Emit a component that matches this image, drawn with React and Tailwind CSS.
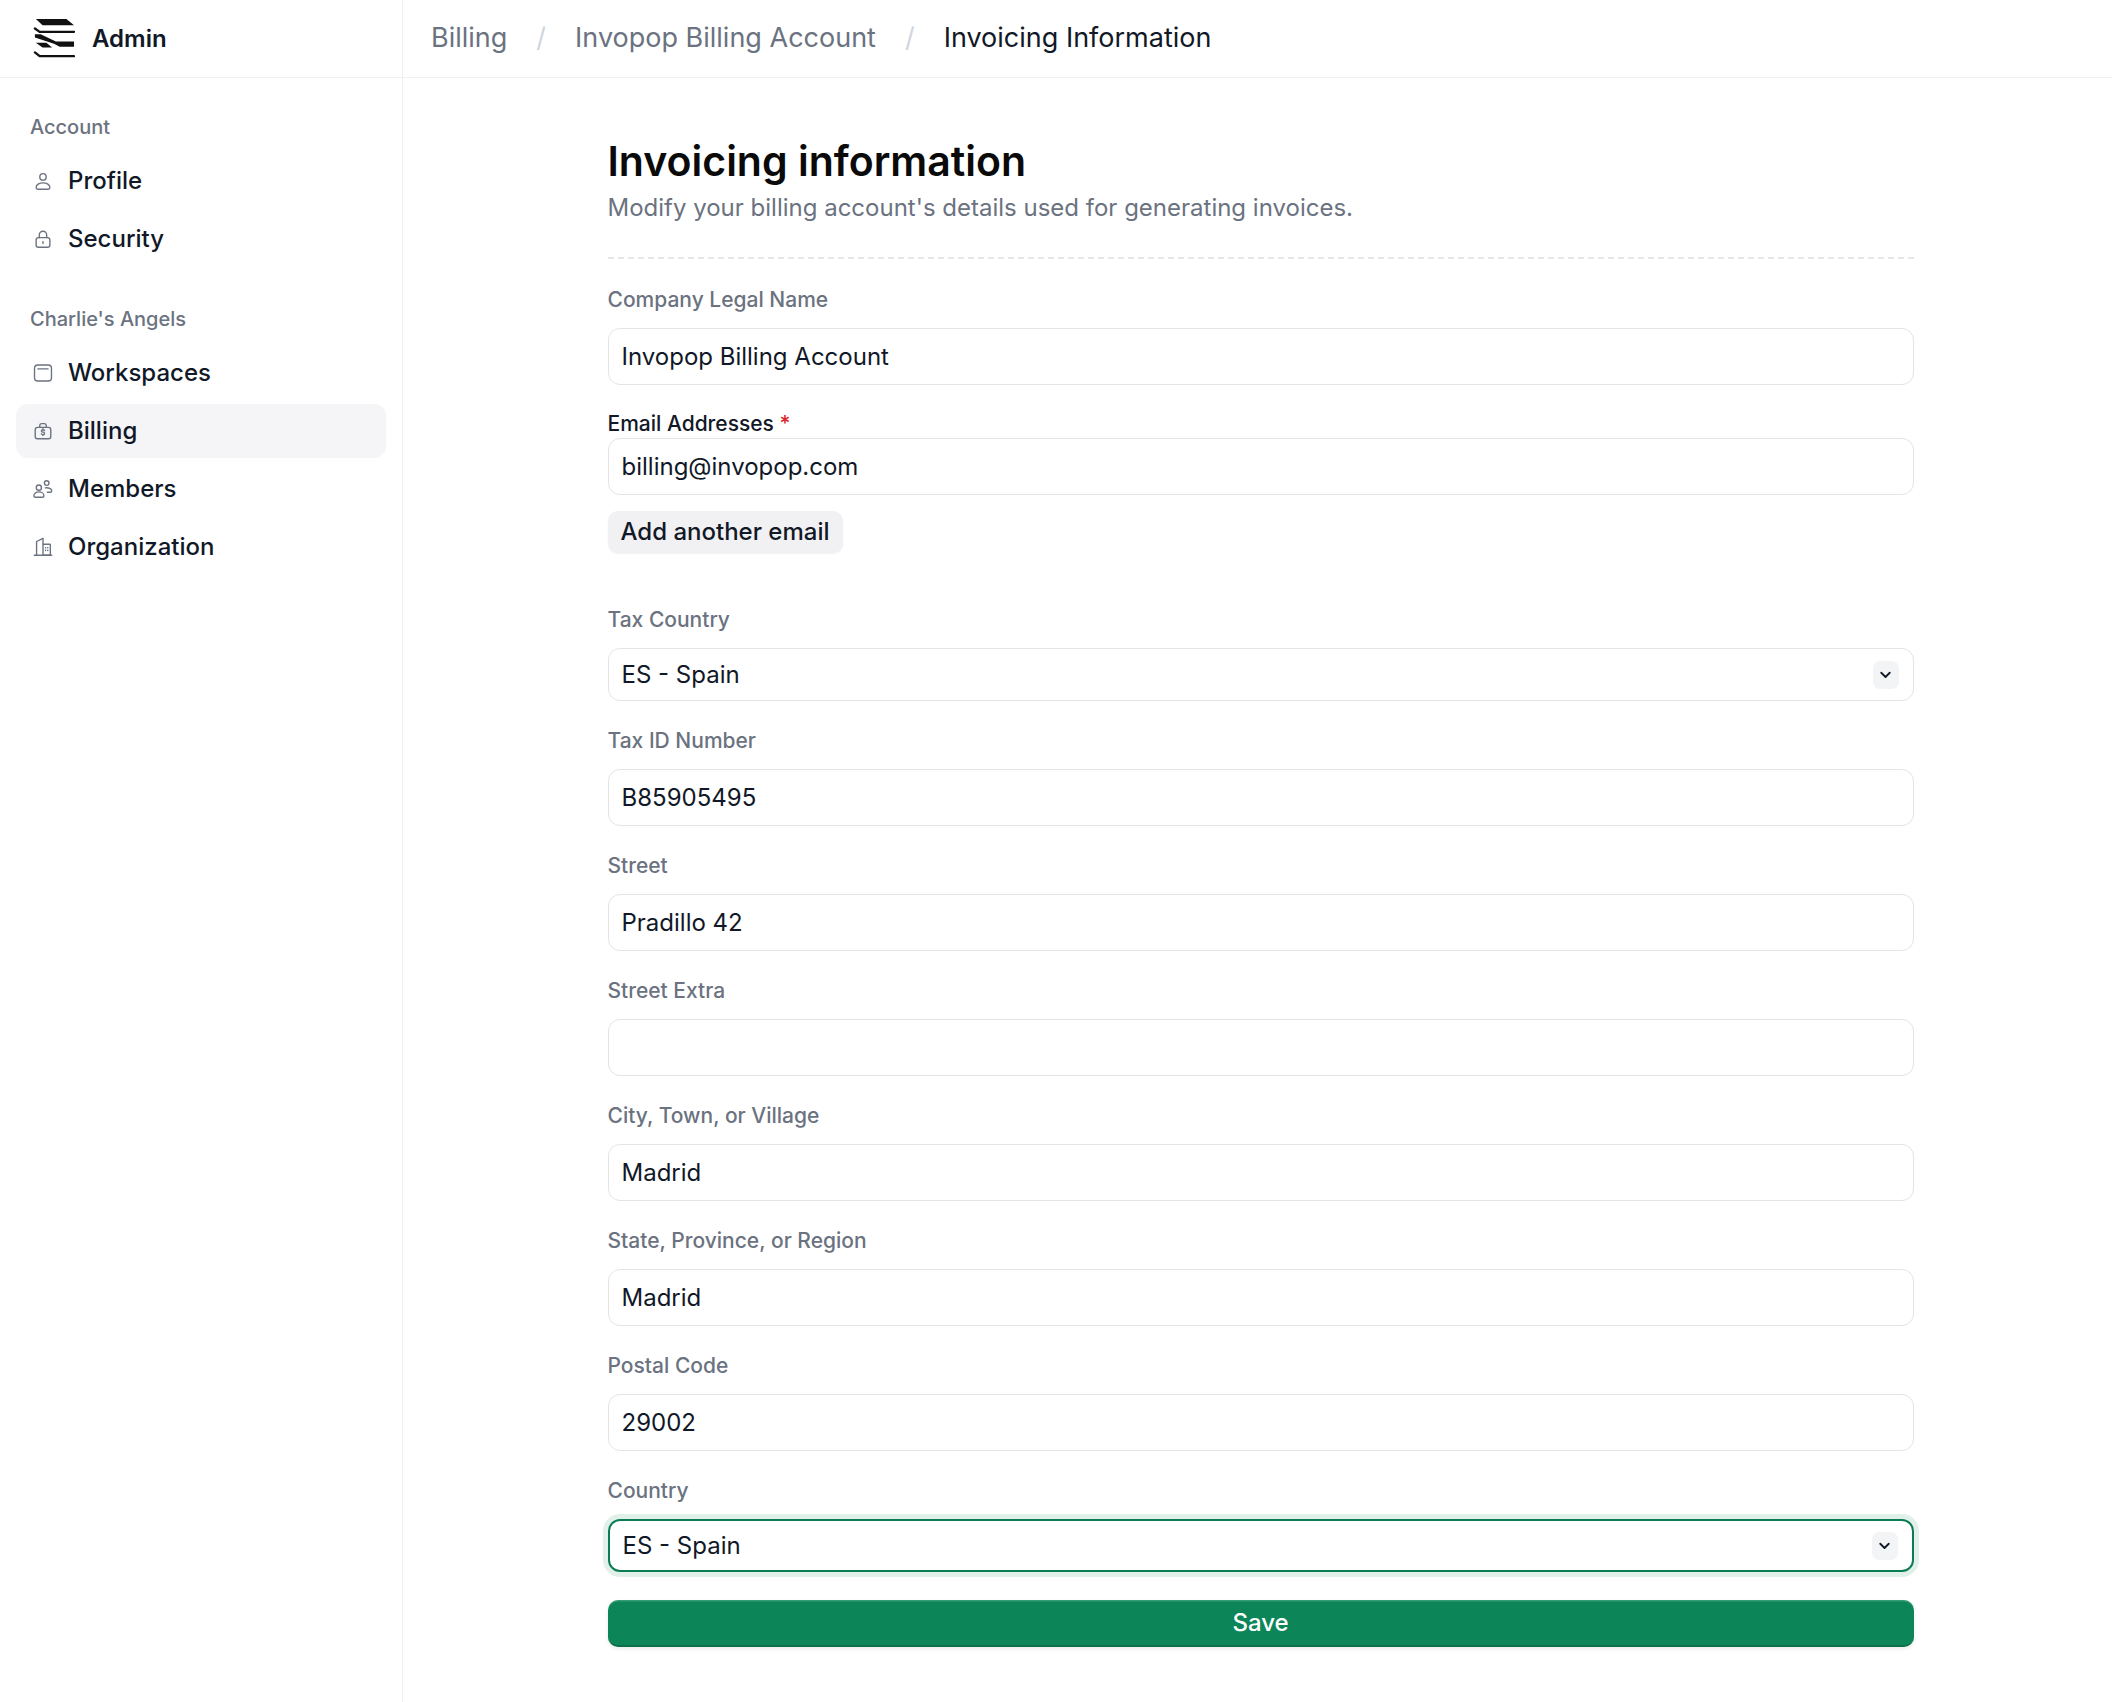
import React from "react";

const ic = "w-[22px] h-[22px] shrink-0 text-[#6b7280]";

function Logo() {
  return (
    <svg viewBox="0 0 44 46" width="42" height="44" className="shrink-0">
      <polygon points="3,2 35,2 43,8.5 10,8.5" fill="#111" />
      <path d="M2 12 L7 15.5 H43" stroke="#111" strokeWidth="2.4" fill="none" strokeLinecap="round" />
      <polygon points="2,18 8,18 24,25.5 43,25.5 43,31 28,31 22,28 2,21.5" fill="#111" />
      <polygon points="3,27 14,27 20,32 10,32" fill="#111" />
      <path d="M2 37 L7 41 H43" stroke="#111" strokeWidth="2.4" fill="none" strokeLinecap="round" />
    </svg>
  );
}

const IconProfile = () => (
  <svg viewBox="0 0 24 24" className={ic} fill="none" stroke="currentColor" strokeWidth="1.5" strokeLinecap="round" strokeLinejoin="round">
    <circle cx="12" cy="7.5" r="3.5" />
    <path d="M4.5 19.2c0-3 3.4-5.2 7.5-5.2s7.5 2.2 7.5 5.2c0 1-.8 1.8-1.8 1.8H6.3c-1 0-1.8-.8-1.8-1.8z" />
  </svg>
);
const IconLock = () => (
  <svg viewBox="0 0 24 24" className={ic} fill="none" stroke="currentColor" strokeWidth="1.5" strokeLinecap="round" strokeLinejoin="round">
    <path d="M8 10.5V7.5a4 4 0 0 1 8 0v3" />
    <rect x="4.5" y="10.5" width="15" height="10.5" rx="2.5" />
    <path d="M12 14.8v2.2" />
  </svg>
);
const IconWindow = () => (
  <svg viewBox="0 0 24 24" className={ic} fill="none" stroke="currentColor" strokeWidth="1.5" strokeLinecap="round" strokeLinejoin="round">
    <rect x="2.75" y="3.25" width="18.5" height="17.5" rx="3.5" />
    <path d="M6.5 7.5h11" />
  </svg>
);
const IconBilling = () => (
  <svg viewBox="0 0 24 24" className={ic} fill="none" stroke="currentColor" strokeWidth="1.5" strokeLinecap="round" strokeLinejoin="round">
    <path d="M8.5 8V6a2 2 0 0 1 2-2h3a2 2 0 0 1 2 2v2" />
    <rect x="3.5" y="8" width="17" height="12.5" rx="2.5" />
    <path d="M13.7 11.6c-.3-.6-1-1-1.7-1-1 0-1.7.6-1.7 1.3 0 1.8 3.4 1 3.4 2.8 0 .8-.8 1.3-1.7 1.3-.8 0-1.5-.4-1.8-1M12 9.6v1M12 15.9v1" />
  </svg>
);
const IconMembers = () => (
  <svg viewBox="0 0 24 24" className={ic} fill="none" stroke="currentColor" strokeWidth="1.5" strokeLinecap="round" strokeLinejoin="round">
    <circle cx="7.5" cy="10.5" r="2.8" />
    <circle cx="16" cy="5.5" r="2.5" />
    <path d="M2 19.5c0-2.6 2.5-4.3 5.5-4.3s5.5 1.7 5.5 4.3c0 .8-.7 1.5-1.5 1.5h-8C2.7 21 2 20.3 2 19.5z" />
    <path d="M14.5 10.8c3.6-.5 7 .9 7 3.4 0 .8-.6 1.4-1.4 1.4h-3.3" />
  </svg>
);
const IconBuilding = () => (
  <svg viewBox="0 0 24 24" className={ic} fill="none" stroke="currentColor" strokeWidth="1.5" strokeLinecap="round" strokeLinejoin="round">
    <path d="M2.5 21h19" />
    <path d="M5 21V6l7-3.5V9" />
    <rect x="12" y="9" width="8" height="12" rx="0.8" />
    <path d="M14.8 12.8h.01M17.2 12.8h.01M14.8 15.6h.01M17.2 15.6h.01" strokeWidth="1.8" />
  </svg>
);

function Chevron() {
  return (
    <div className="w-[26px] h-[28px] rounded-[7px] bg-[#f3f4f6] flex items-center justify-center">
      <svg viewBox="0 0 24 24" className="w-[17px] h-[17px] text-[#111827]" fill="none" stroke="currentColor" strokeWidth="2.6" strokeLinecap="round" strokeLinejoin="round">
        <path d="M6 9.5l6 6 6-6" />
      </svg>
    </div>
  );
}

function NavItem({ icon, label, active }) {
  return (
    <div
      className={
        "h-[54px] rounded-[12px] px-[16px] flex items-center gap-[14px] " +
        (active ? "bg-[#f5f5f7]" : "")
      }
    >
      {icon}
      <span className="text-[24px] font-medium text-[#111827] leading-none">{label}</span>
    </div>
  );
}

function Label({ children }) {
  return (
    <div className="text-[21px] leading-[30px] font-medium text-[#6b7280]">{children}</div>
  );
}

function TextField({ label, value }) {
  return (
    <div className="flex flex-col gap-[13px]">
      <Label>{label}</Label>
      <input
        readOnly
        value={value}
        className="h-[57px] w-full rounded-[12px] border-[1.5px] border-[#e4e4e7] bg-white px-[13px] text-[24px] text-[#111827] outline-none"
      />
    </div>
  );
}

function SelectField({ label, value, focused }) {
  return (
    <div className="flex flex-col gap-[13px]">
      <Label>{label}</Label>
      <div
        className={
          "h-[53px] w-full rounded-[12px] bg-white flex items-center justify-between pl-[13px] pr-[14px] " +
          (focused
            ? "border-[2.5px] border-[#0b7d55] ring-[5px] ring-[#e2f0ea]"
            : "border-[1.5px] border-[#e4e4e7]")
        }
      >
        <span className="text-[24px] text-[#111827]">{value}</span>
        <Chevron />
      </div>
    </div>
  );
}

export default function App() {
  return (
    <div className="min-h-screen flex bg-white font-['Inter','Noto_Sans',sans-serif] text-[#111827]">
      {/* Sidebar */}
      <aside className="w-[403px] shrink-0 border-r-[1.5px] border-[#f0f0f2] flex flex-col">
        <div className="h-[78px] border-b-[1.5px] border-[#f0f0f2] flex items-center pl-[33px] gap-[17px]">
          <Logo />
          <span className="text-[24px] font-semibold text-[#111827]">Admin</span>
        </div>
        <nav className="px-[16px] pt-[34px] flex flex-col">
          <div className="pl-[14px] text-[20px] leading-[30px] font-medium text-[#6b7280]">Account</div>
          <div className="mt-[12px] flex flex-col gap-[4px]">
            <NavItem icon={<IconProfile />} label="Profile" />
            <NavItem icon={<IconLock />} label="Security" />
          </div>
          <div className="mt-[38px] pl-[14px] text-[20px] leading-[30px] font-medium text-[#6b7280]">Charlie's Angels</div>
          <div className="mt-[12px] flex flex-col gap-[4px]">
            <NavItem icon={<IconWindow />} label="Workspaces" />
            <NavItem icon={<IconBilling />} label="Billing" active />
            <NavItem icon={<IconMembers />} label="Members" />
            <NavItem icon={<IconBuilding />} label="Organization" />
          </div>
        </nav>
      </aside>

      {/* Main */}
      <main className="flex-1 flex flex-col min-w-0">
        <header className="h-[78px] border-b-[1.5px] border-[#f0f0f2] flex items-center pl-[28px] gap-[29px] text-[27px]">
          <span className="text-[#6b7280]">Billing</span>
          <span className="text-[#d1d5db]">/</span>
          <span className="text-[#6b7280]">Invopop Billing Account</span>
          <span className="text-[#d1d5db]">/</span>
          <span className="text-[#111827]">Invoicing Information</span>
        </header>

        <div className="flex justify-center pl-[6px]">
          <div className="w-[1306px] pt-[58px] pb-[50px] flex flex-col">
            <h1 className="text-[41px] leading-[50px] font-semibold text-[#0a0a0a]">Invoicing information</h1>
            <p className="mt-[4px] text-[24px] leading-[36px] text-[#6b7280]">
              Modify your billing account's details used for generating invoices.
            </p>
            <div className="mt-[31px] border-t-2 border-dashed border-[#e5e7eb]" />

            <div className="mt-[26px] flex flex-col">
              <TextField label="Company Legal Name" value="Invopop Billing Account" />

              <div className="mt-[25px] flex flex-col">
                <div className="text-[21px] leading-[28px] font-medium text-[#111827]">
                  Email Addresses <span className="text-[#dc2626]">*</span>
                </div>
                <input
                  readOnly
                  value="billing@invopop.com"
                  className="h-[57px] w-full rounded-[12px] border-[1.5px] border-[#e4e4e7] bg-white px-[13px] text-[24px] text-[#111827] outline-none"
                />
                <div className="mt-[16px]">
                  <button className="h-[42px] px-[13px] rounded-[10px] bg-[#f1f1f3] shadow-[0_1px_2px_rgba(0,0,0,0.06)] text-[24px] font-medium text-[#111827]">
                    Add another email
                  </button>
                </div>
              </div>

              <div className="mt-[52px] flex flex-col gap-[25px]">
                <SelectField label="Tax Country" value="ES - Spain" />
                <TextField label="Tax ID Number" value="B85905495" />
                <TextField label="Street" value="Pradillo 42" />
                <TextField label="Street Extra" value="" />
                <TextField label="City, Town, or Village" value="Madrid" />
                <TextField label="State, Province, or Region" value="Madrid" />
                <TextField label="Postal Code" value="29002" />
                <SelectField label="Country" value="ES - Spain" focused />
              </div>

              <button className="mt-[28px] h-[47px] w-full rounded-[10px] bg-[#0c8558] border-b-[2px] border-[#0a7049] shadow-[inset_0_1.5px_0_rgba(255,255,255,0.18),0_2px_4px_rgba(0,0,0,0.08)] text-[24px] font-medium text-white">
                Save
              </button>
            </div>
          </div>
        </div>
      </main>
    </div>
  );
}
